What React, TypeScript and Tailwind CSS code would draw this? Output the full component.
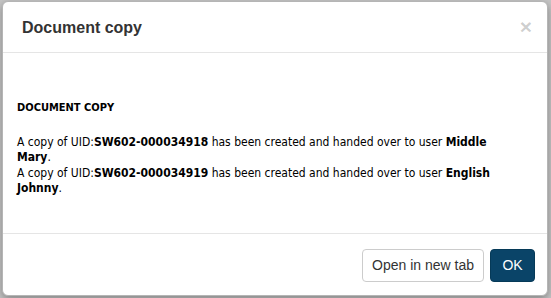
export default function App() {
  return (
    <div className="h-[298px] w-[551px] overflow-hidden bg-[#c6c6c6] pl-[2px] pt-[1px]">
      <div className="flex h-[295px] w-[546px] flex-col rounded-[6px] border border-[#b5b5b5] bg-white shadow-[0_3px_9px_rgba(0,0,0,0.35)]">
        <div className="flex h-[51px] shrink-0 items-center justify-between border-b border-[#e5e5e5] pl-[19px] pr-[15px] font-['Liberation_Sans',Arial,sans-serif]">
          <h4 className="pt-[1px] text-[16px] font-bold text-[#333]">Document copy</h4>
          <button
            type="button"
            className="-mt-[2px] text-[21px] font-bold leading-none text-black/20"
            aria-label="Close"
          >
            ×
          </button>
        </div>

        <div className="flex-1 px-[14px] pt-[47px] font-['DejaVu_Sans_Condensed','DejaVu_Sans',Verdana,sans-serif] text-[12px] leading-[15.5px] text-black">
          <p className="text-[11px] font-bold">DOCUMENT COPY</p>
          <p className="mt-[19px]">
            A copy of UID:<b>SW602-000034918</b> has been created and handed over to user <b>Middle</b>
            <br />
            <b>Mary</b>.
            <br />
            A copy of UID:<b>SW602-000034919</b> has been created and handed over to user <b>English</b>
            <br />
            <b>Johnny</b>.
          </p>
        </div>

        <div className="flex h-[62px] shrink-0 items-start justify-end gap-[6px] border-t border-[#e5e5e5] pr-[12px] pt-[15px] font-['Liberation_Sans',Arial,sans-serif] text-[14px]">
          <button
            type="button"
            className="h-[33px] w-[122px] rounded-[4px] border border-[#ccc] bg-white text-[#333]"
          >
            Open in new tab
          </button>
          <button
            type="button"
            className="h-[33px] w-[45px] rounded-[4px] border border-[#063a58] bg-[#0a4468] text-white"
          >
            OK
          </button>
        </div>
      </div>
    </div>
  );
}
